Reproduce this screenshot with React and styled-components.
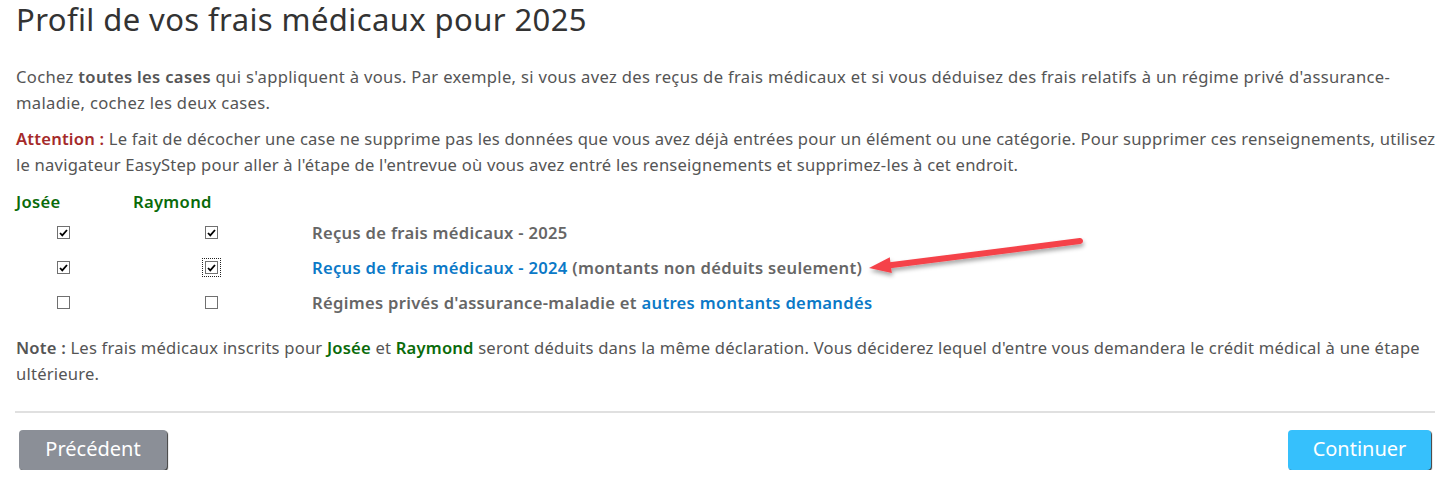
import React from "react";
import styled, { createGlobalStyle } from "styled-components";

const GlobalStyle = createGlobalStyle`
  html, body {
    margin: 0;
    padding: 0;
    background: #fff;
  }
  body {
    font-family: "Noto Sans", Lato, "Liberation Sans", sans-serif;
    color: #555;
  }
`;

const Page = styled.div`
  padding: 0 2px 0 16px;
  width: 1440px;
  box-sizing: border-box;
`;

const Title = styled.h1`
  margin: 0;
  font-size: 31px;
  font-weight: 400;
  color: #333;
  line-height: 38px;
  letter-spacing: 0.4px;
`;

const Para = styled.p`
  margin: ${(p) => p.$top || 0}px 0 0;
  font-size: 16.6px;
  line-height: 26px;
  letter-spacing: ${(p) => p.$spacing || 0.2}px;
`;

const Strong = styled.b`
  font-weight: 600;
  color: ${(p) => p.$color || "#555"};
`;

const Table = styled.div`
  position: relative;
  margin-top: 11px;
`;

const HeadRow = styled.div`
  display: grid;
  grid-template-columns: 117px auto;
  font-size: 16.6px;
  font-weight: 600;
  color: #0a6b0a;
  line-height: 26px;
  letter-spacing: 0.3px;
`;

const Row = styled.div`
  display: grid;
  grid-template-columns: 94px 202px 1fr;
  align-items: center;
  height: 35px;
  &:first-of-type {
    margin-top: 3px;
  }
`;

const Cell = styled.div`
  display: flex;
  justify-content: center;
`;

const BoxWrap = styled.span`
  display: inline-flex;
  padding: 3px;
  outline: ${(p) => (p.$focus ? "1px dotted #222" : "none")};
  outline-offset: -1px;
`;

const Box = styled.span`
  width: 13px;
  height: 13px;
  box-sizing: border-box;
  border: 1px solid #707070;
  background: #fff;
  display: flex;
  align-items: center;
  justify-content: center;
`;

const Label = styled.div`
  font-size: 16.6px;
  font-weight: 600;
  color: #666;
  letter-spacing: 0.3px;
`;

const Link = styled.span`
  color: #0b79c7;
`;

const Divider = styled.hr`
  margin: 24px 3px 0 -1px;
  border: none;
  border-top: 2px solid #e0e0e0;
`;

const Footer = styled.div`
  display: flex;
  justify-content: space-between;
  align-items: center;
  padding: 17px 7px 0 3px;
`;

const Button = styled.button`
  font-family: "Noto Sans", Lato, sans-serif;
  font-size: 20px;
  color: #fff;
  background: ${(p) => (p.$primary ? "#36c0fc" : "#8b8f97")};
  border: none;
  border-radius: 4px;
  box-shadow: 1px 1px 1px #3a3a3a;
  height: 40px;
  width: ${(p) => p.$w}px;
  padding: 0 0 4px;
  cursor: pointer;
`;

const Arrow = styled.svg`
  position: absolute;
  left: 844px;
  top: 40px;
  overflow: visible;
`;

const Check = ({ checked, focus }) => (
  <BoxWrap $focus={focus}>
    <Box>
      {checked && (
        <svg width="9" height="8" viewBox="0 0 9 8">
          <path d="M1 4 L3.3 6.4 L8 1" fill="none" stroke="#000" strokeWidth="1.8" />
        </svg>
      )}
    </Box>
  </BoxWrap>
);

export default function App() {
  return (
    <>
      <GlobalStyle />
      <Page>
        <Title>Profil de vos frais médicaux pour 2025</Title>
        <Para $top={26} $spacing={0.32}>
          Cochez <Strong>toutes les cases</Strong> qui s'appliquent à vous. Par exemple, si vous avez des reçus de
          frais médicaux et si vous déduisez des frais relatifs à un régime privé d'assurance-maladie, cochez les
          deux cases.
        </Para>
        <Para $top={10}>
          <Strong $color="#a52a2a">Attention :</Strong> Le fait de décocher une case ne supprime pas les données que
          vous avez déjà entrées pour un élément ou une catégorie. Pour supprimer ces renseignements, utilisez le
          navigateur EasyStep pour aller à l'étape de l'entrevue où vous avez entré les renseignements et
          supprimez-les à cet endroit.
        </Para>
        <Table>
          <HeadRow>
            <span>Josée</span>
            <span>Raymond</span>
          </HeadRow>
          <Row>
            <Cell><Check checked /></Cell>
            <Cell><Check checked /></Cell>
            <Label>Reçus de frais médicaux - 2025</Label>
          </Row>
          <Row>
            <Cell><Check checked /></Cell>
            <Cell><Check checked focus /></Cell>
            <Label>
              <Link>Reçus de frais médicaux - 2024</Link> (montants non déduits seulement)
            </Label>
          </Row>
          <Row>
            <Cell><Check /></Cell>
            <Cell><Check /></Cell>
            <Label>
              Régimes privés d'assurance-maladie et <Link>autres montants demandés</Link>
            </Label>
          </Row>
          <Arrow width="230" height="40" viewBox="0 0 230 40">
            <defs>
              <filter id="sh" x="-20%" y="-50%" width="140%" height="200%">
                <feDropShadow dx="1" dy="3" stdDeviation="2" floodColor="#000" floodOpacity="0.35" />
              </filter>
            </defs>
            <g filter="url(#sh)">
              <line x1="220" y1="12" x2="26" y2="36.8" stroke="#f5424a" strokeWidth="6" strokeLinecap="round" />
              <polygon points="9,39 29.8,28.3 31.8,44.1" fill="#f5424a" />
            </g>
          </Arrow>
        </Table>
        <Para $top={15}>
          <Strong>Note :</Strong> Les frais médicaux inscrits pour <Strong $color="#0a6b0a">Josée</Strong> et{" "}
          <Strong $color="#0a6b0a">Raymond</Strong> seront déduits dans la même déclaration. Vous déciderez lequel
          d'entre vous demandera le crédit médical à une étape ultérieure.
        </Para>
        <Divider />
        <Footer>
          <Button $w={148}>Précédent</Button>
          <Button $primary $w={143}>Continuer</Button>
        </Footer>
      </Page>
    </>
  );
}
